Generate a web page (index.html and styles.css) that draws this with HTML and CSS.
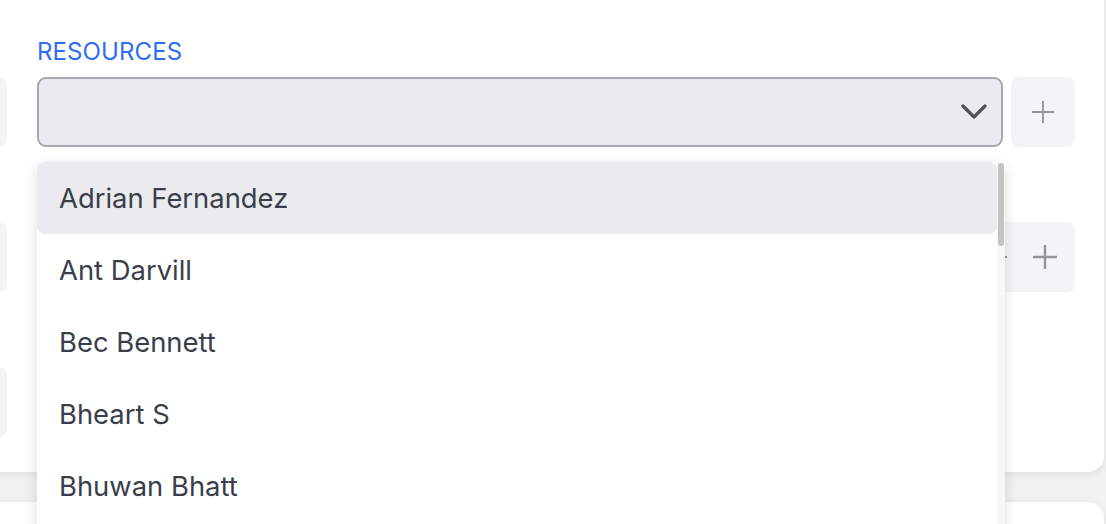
FILE: index.html
```html
<!DOCTYPE html>
<html lang="en">
<head>
    <meta charset="UTF-8">
    <title>Resources</title>
    <link rel="stylesheet" href="styles.css">
</head>
<body>
    <div class="page">
        <div class="card">
            <div class="stubs">
                <div class="stub"></div>
                <div class="stub"></div>
                <div class="stub"></div>
            </div>
            <div class="fields">
                <div class="field">
                    <label class="field-label">RESOURCES</label>
                    <div class="field-row">
                        <div class="select">
                            <svg class="chevron" width="26" height="16" viewBox="0 0 26 16">
                                <polyline points="2,2 13,13 24,2" fill="none" stroke="#505055" stroke-width="3.2" stroke-linecap="round" stroke-linejoin="round"/>
                            </svg>
                        </div>
                        <button class="add-btn">
                            <svg width="24" height="24" viewBox="0 0 24 24">
                                <path d="M12 1v22M1 12h22" stroke="#939399" stroke-width="1.8"/>
                            </svg>
                        </button>
                    </div>
                </div>
                <div class="field">
                    <div class="field-label"></div>
                    <div class="field-row">
                        <div class="input"></div>
                        <div class="stepper">
                            <span class="dash"></span>
                            <svg width="24" height="24" viewBox="0 0 24 24">
                                <path d="M12 0v24M0 12h24" stroke="#939399" stroke-width="2.4"/>
                            </svg>
                        </div>
                    </div>
                </div>
                <div class="field">
                    <div class="field-label"></div>
                    <div class="field-row">
                        <div class="input"></div>
                    </div>
                </div>
            </div>
        </div>
        <div class="card card-next"></div>

        <div class="dropdown">
            <ul class="options">
                <li class="option active">Adrian Fernandez</li>
                <li class="option">Ant Darvill</li>
                <li class="option">Bec Bennett</li>
                <li class="option">Bheart S</li>
                <li class="option">Bhuwan Bhatt</li>
            </ul>
            <div class="scrollbar"><div class="thumb"></div></div>
        </div>
    </div>
</body>
</html>
```

FILE: styles.css
```css
html, body {
    margin: 0;
    padding: 0;
    height: 100%;
    overflow: hidden;
}
body {
    background-color: #f1f1f2;
    font-family: Inter, "Noto Sans", sans-serif;
}
.page {
    position: relative;
    display: flow-root;
    height: 524px;
    overflow: hidden;
}
.card {
    display: flex;
    gap: 30px;
    margin-left: -40px;
    margin-top: -30px;
    width: 1144px;
    height: 502px;
    background-color: #fff;
    border-radius: 16px;
    box-shadow: 0 2px 8px rgba(0, 0, 0, 0.08);
    box-sizing: border-box;
    padding-top: 67px;
}
.card-next {
    margin-top: 30px;
    height: 200px;
    padding: 0;
}
.stubs {
    width: 47px;
    display: flex;
    flex-direction: column;
    gap: 75px;
    padding-top: 40px;
}
.stub {
    height: 70px;
    background-color: #f3f4f6;
    border-radius: 8px;
}
.fields {
    display: flex;
    flex-direction: column;
    gap: 35px;
}
.field {
    display: flex;
    flex-direction: column;
    gap: 10px;
}
.field-label {
    height: 30px;
    font-size: 24px;
    line-height: 30px;
    color: #2f6cf4;
    letter-spacing: 0.1px;
}
.field-row {
    display: flex;
    gap: 8px;
    height: 70px;
}
.select {
    width: 966px;
    box-sizing: border-box;
    border: 2.5px solid #a6a6ad;
    border-radius: 9px;
    background-color: #ebebef;
    display: flex;
    align-items: center;
    justify-content: flex-end;
    padding-right: 14px;
}
.input {
    width: 966px;
    background-color: #f3f4f6;
    border-radius: 8px;
}
.add-btn {
    width: 64px;
    border: none;
    border-radius: 8px;
    background-color: #f3f4f6;
    display: flex;
    align-items: center;
    justify-content: center;
    padding: 0;
}
.stepper {
    width: 96px;
    margin-left: -32px;
    border-radius: 8px;
    background-color: #f3f4f6;
    display: flex;
    align-items: center;
    justify-content: flex-end;
    gap: 26px;
    padding-right: 18px;
    box-sizing: border-box;
}
.dash {
    width: 4px;
    height: 2px;
    background-color: #939399;
}
.dropdown {
    position: absolute;
    left: 37px;
    top: 162px;
    width: 968px;
    height: 400px;
    background-color: #fff;
    border-radius: 8px;
    box-shadow: 0 4px 14px rgba(0, 0, 0, 0.13);
    display: flex;
}
.options {
    list-style: none;
    margin: 0;
    padding: 0;
    flex: 1;
}
.option {
    height: 72px;
    display: flex;
    align-items: center;
    padding-left: 22px;
    font-size: 27.4px;
    color: #3a3e4a;
}
.option.active {
    background-color: #ebebef;
    border-radius: 8px;
}
.scrollbar {
    width: 8px;
    background-color: #f7f7f7;
    border-top-right-radius: 8px;
}
.thumb {
    margin: 1px 1px 0 1px;
    height: 83px;
    background-color: #c3c3c3;
    border-radius: 4px;
}
```
